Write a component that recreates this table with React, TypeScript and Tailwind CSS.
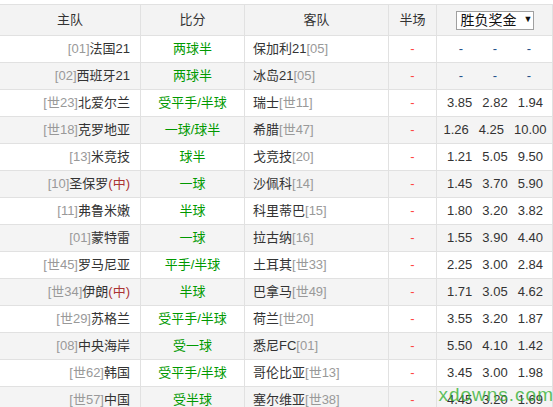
import React from "react";

type Match = {
  homeRank: string;
  home: string;
  homeTag?: string;
  handicap: string;
  away: string;
  awayRank: string;
  odds: string[];
};

const matches: Match[] = [
  { homeRank: "[01]", home: "法国21", handicap: "两球半", away: "保加利21", awayRank: "[05]", odds: ["-", "-", "-"] },
  { homeRank: "[02]", home: "西班牙21", handicap: "两球半", away: "冰岛21", awayRank: "[05]", odds: ["-", "-", "-"] },
  { homeRank: "[世23]", home: "北爱尔兰", handicap: "受平手/半球", away: "瑞士", awayRank: "[世11]", odds: ["3.85", "2.82", "1.94"] },
  { homeRank: "[世18]", home: "克罗地亚", handicap: "一球/球半", away: "希腊", awayRank: "[世47]", odds: ["1.26", "4.25", "10.00"] },
  { homeRank: "[13]", home: "米竞技", handicap: "球半", away: "戈竞技", awayRank: "[20]", odds: ["1.21", "5.05", "9.50"] },
  { homeRank: "[10]", home: "圣保罗", homeTag: "(中)", handicap: "一球", away: "沙佩科", awayRank: "[14]", odds: ["1.45", "3.70", "5.90"] },
  { homeRank: "[11]", home: "弗鲁米嫩", handicap: "半球", away: "科里蒂巴", awayRank: "[15]", odds: ["1.80", "3.20", "3.82"] },
  { homeRank: "[01]", home: "蒙特雷", handicap: "一球", away: "拉古纳", awayRank: "[16]", odds: ["1.55", "3.90", "4.40"] },
  { homeRank: "[世45]", home: "罗马尼亚", handicap: "平手/半球", away: "土耳其", awayRank: "[世33]", odds: ["2.25", "3.00", "2.84"] },
  { homeRank: "[世34]", home: "伊朗", homeTag: "(中)", handicap: "半球", away: "巴拿马", awayRank: "[世49]", odds: ["1.71", "3.05", "4.62"] },
  { homeRank: "[世29]", home: "苏格兰", handicap: "受平手/半球", away: "荷兰", awayRank: "[世20]", odds: ["3.55", "3.20", "1.87"] },
  { homeRank: "[08]", home: "中央海岸", handicap: "受一球", away: "悉尼FC", awayRank: "[01]", odds: ["5.50", "4.10", "1.42"] },
  { homeRank: "[世62]", home: "韩国", handicap: "受平手/半球", away: "哥伦比亚", awayRank: "[世13]", odds: ["3.45", "3.00", "1.98"] },
  { homeRank: "[世57]", home: "中国", handicap: "受半球", away: "塞尔维亚", awayRank: "[世38]", odds: ["4.45", "3.20", "1.69"] },
];

const cols = "grid grid-cols-[141px_104px_144px_48px_116px]";
const cell = "border-r border-[#e1e1e1] flex items-center";

const App = () => {
  return (
    <div className="relative h-[407px] w-[553px] overflow-hidden bg-white pt-[4px] font-['Liberation_Sans','Noto_Sans_CJK_SC',sans-serif] text-[13px] text-[#333]">
      <div className={`${cols} h-[32px] border-y border-[#e1e1e1] bg-[#f3f3f3]`}>
        <div className={`${cell} justify-center`}>主队</div>
        <div className={`${cell} justify-center`}>比分</div>
        <div className={`${cell} justify-center`}>客队</div>
        <div className={`${cell} justify-center`}>半场</div>
        <div className={`${cell} justify-center`}>
          <div className="flex h-[19px] w-[78px] items-center gap-[7px] border border-[#a0a0a0] bg-white pl-[4px] text-[14px] text-[#111]">
            胜负奖金
            <span className="text-[9px]">▼</span>
          </div>
        </div>
      </div>

      {matches.map((m, i) => (
        <div
          key={i}
          className={`${cols} h-[27px] border-b border-[#e1e1e1] ${i % 2 === 1 ? "bg-[#f4f4f4]" : "bg-white"}`}
        >
          <div className={`${cell} justify-end pr-[10px]`}>
            <span className="text-[#999]">{m.homeRank}</span>
            <span>{m.home}</span>
            {m.homeTag && <span className="text-[#a33]">{m.homeTag}</span>}
          </div>
          <div className={`${cell} justify-center text-[#090]`}>{m.handicap}</div>
          <div className={`${cell} pl-[8px]`}>
            <span>{m.away}</span>
            <span className="text-[#999]">{m.awayRank}</span>
          </div>
          <div className={`${cell} justify-center text-[#f44]`}>-</div>
          <div className={`${cell} justify-center gap-[10px] pl-[1px]`}>
            {m.odds.map((o, j) =>
              o === "-" ? (
                <span key={j} className="w-[24px] text-center text-[#23508a]">-</span>
              ) : (
                <span key={j} className="text-[#333]">{o}</span>
              )
            )}
          </div>
        </div>
      ))}

      <div className="absolute right-[-1px] top-[385px] text-[19px] leading-none tracking-[1px] text-[#33b033]/80">
        xdowns.com
      </div>
    </div>
  );
};

export default App;
